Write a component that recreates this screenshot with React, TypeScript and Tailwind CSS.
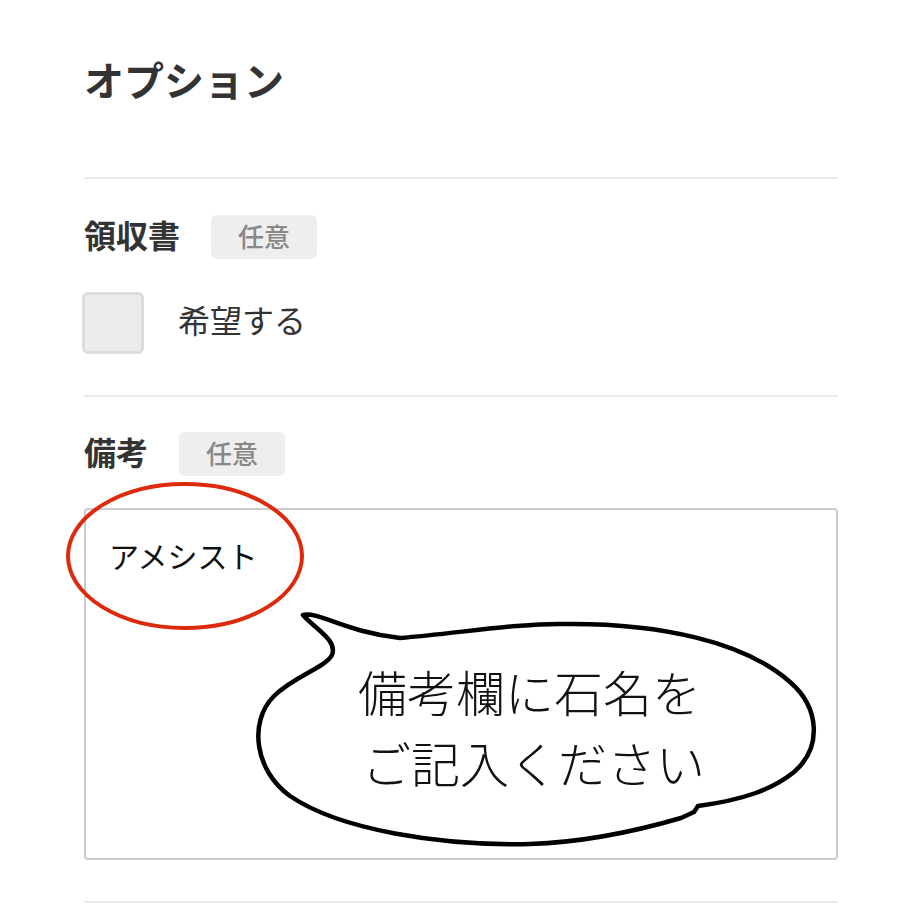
const badge = (
  <span className="flex h-[44px] w-[106px] items-center justify-center rounded-md bg-[#eeeeee] pb-[4px] text-[26px] font-medium text-[#888888]">
    任意
  </span>
);

function Annotation() {
  return (
    <>
      <svg
        className="pointer-events-none absolute left-0 top-0"
        width="920"
        height="920"
        viewBox="0 0 920 920"
      >
        <ellipse cx="185" cy="556" rx="117" ry="72" fill="none" stroke="#dd2a0c" strokeWidth="4" />
        <path
          d="M303 615 C318 611 345 632 400 638 C460 633 520 623 565 624 C660 623 745 642 790 682 C820 708 822 748 794 772 C772 790 742 800 698 806 L694 812 L681 818 C640 830 590 842 530 844 C440 846 340 830 290 796 C255 771 248 722 274 696 C294 676 325 668 332 655 C338 640 314 628 303 615 Z"
          fill="#ffffff"
          stroke="#000000"
          strokeWidth="4.5"
          strokeLinejoin="round"
        />
      </svg>
      <div className="pointer-events-none absolute left-[358px] top-[655px] w-[370px] text-[49px] font-light leading-[71px] text-[#111111]">
        <p>備考欄に石名を</p>
        <p className="pl-[4px]">ご記入ください</p>
      </div>
    </>
  );
}

export default function App() {
  return (
    <div
      className="relative h-[920px] w-[920px] overflow-hidden bg-white text-[#333333]"
      style={{ fontFamily: '"Noto Sans CJK JP", "Noto Sans", sans-serif' }}
    >
      <div className="w-[838px] pl-[84px] pt-[55px]">
        <h2 className="text-[40px] font-bold leading-[48px]">オプション</h2>

        <section className="mt-[74px] border-t-2 border-[#ebebeb] pb-[41px] pt-[36px]">
          <div className="flex h-[44px] items-center gap-[31px]">
            <h3 className="pb-[7px] text-[32px] font-bold leading-[36px]">領収書</h3>
            {badge}
          </div>
          <label className="mt-[33px] flex items-center gap-[34px]">
            <span className="-ml-[2px] block h-[62px] w-[62px] rounded-md border-[3px] border-[#dcdcdc] bg-[#ececec]" />
            <span className="pb-[8px] text-[32px] leading-[40px]">希望する</span>
          </label>
        </section>

        <section className="border-t-2 border-[#ebebeb] pt-[35px]">
          <div className="flex h-[44px] items-center gap-[31px]">
            <h3 className="pb-[7px] text-[32px] font-bold leading-[36px]">備考</h3>
            {badge}
          </div>
          <div className="mt-[32px] h-[352px] rounded-[4px] border-2 border-[#cccccc] px-[23px] pt-[25px] text-[30px] leading-[40px] text-[#111111]">
            アメシスト
          </div>
        </section>

        <div className="mt-[41px] border-t-2 border-[#ebebeb]" />
      </div>
      <Annotation />
    </div>
  );
}
